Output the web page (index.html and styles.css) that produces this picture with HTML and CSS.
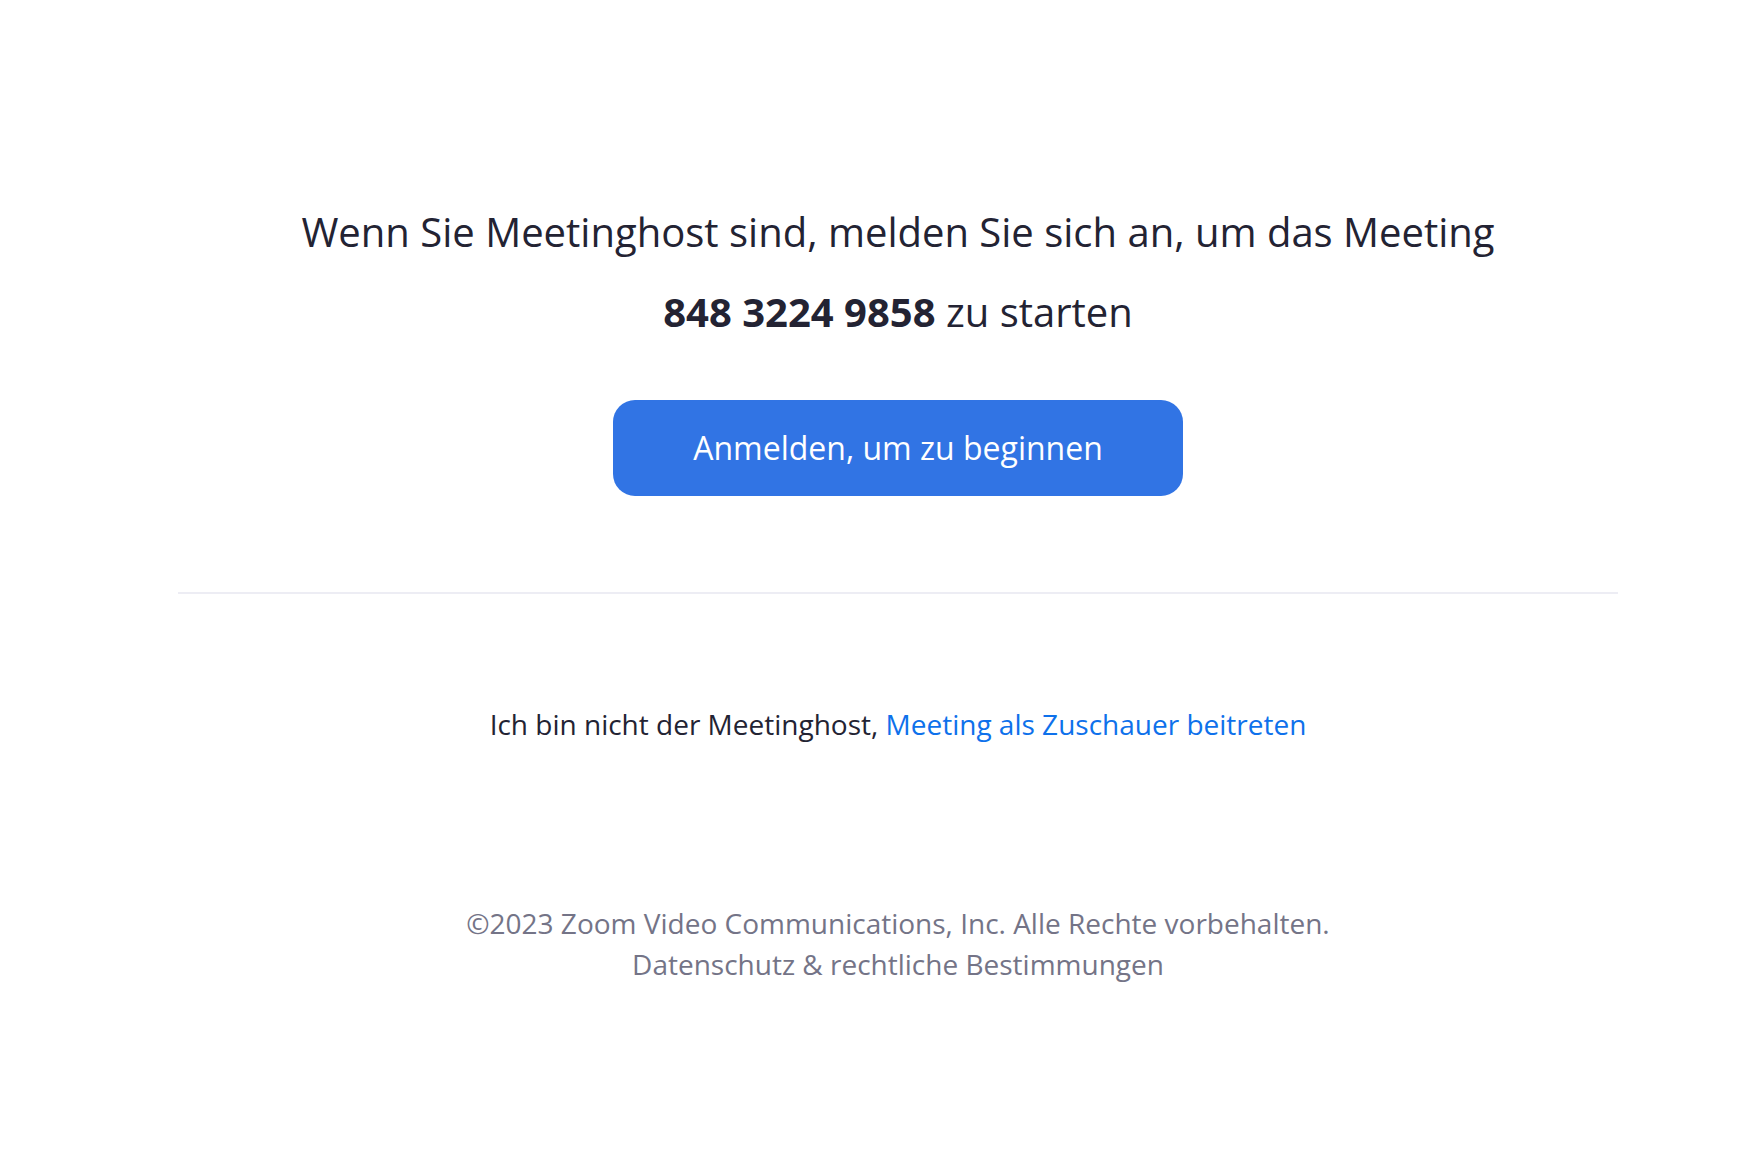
FILE: index.html
```html
<!DOCTYPE html>
<html>

<head>
	<title>Meeting starten - Zoom</title>
	<meta charset="utf-8">
	<meta name="viewport" content="width=device-width, initial-scale=1.0">
	<link rel="stylesheet" href="styles.css">
</head>

<body>
	<main class="seite">
		<section class="start">
			<h1 class="titel">Wenn Sie Meetinghost sind, melden Sie sich an, um das Meeting <br><strong>848 3224 9858</strong> zu starten</h1>
			<button class="anmelden">Anmelden, um zu beginnen</button>
		</section>

		<section class="gast">
			<p>Ich bin nicht der Meetinghost, <a href="#">Meeting als Zuschauer beitreten</a></p>
		</section>

		<footer class="fuss">
			<p>©2023 Zoom Video Communications, Inc. Alle Rechte vorbehalten.<br>
				<a href="#">Datenschutz &amp; rechtliche Bestimmungen</a></p>
		</footer>
	</main>
</body>

</html>
```

FILE: styles.css
```css
body {
	margin: 0;
	padding: 0;
	background-color: #ffffff;
	font-family: "Open Sans", "Noto Sans", sans-serif;
	color: #232333;
}

.seite {
	width: 1440px;
	margin-left: 178px;
	text-align: center;
}

.start {
	padding-top: 192px;
	padding-bottom: 96px;
	border-bottom: 2px solid #ededf4;
}

.titel {
	font-size: 40px;
	font-weight: 400;
	line-height: 80px;
	margin: 0;
}

.titel strong {
	font-weight: 700;
}

.anmelden {
	margin-top: 48px;
	width: 570px;
	height: 96px;
	padding: 0 0 2px 0;
	border: none;
	border-radius: 22px;
	background-color: #3174e4;
	color: #ffffff;
	font-family: "Open Sans", sans-serif;
	font-size: 32px;
	cursor: pointer;
}

.gast p {
	font-size: 28px;
	line-height: 42px;
	margin: 109px 0 0 0;
}

a {
	color: #0e71eb;
	text-decoration: none;
}

.fuss p {
	font-size: 28px;
	line-height: 41px;
	color: #747487;
	margin: 158px 0 0 0;
}

.fuss a {
	color: #747487;
}
```
